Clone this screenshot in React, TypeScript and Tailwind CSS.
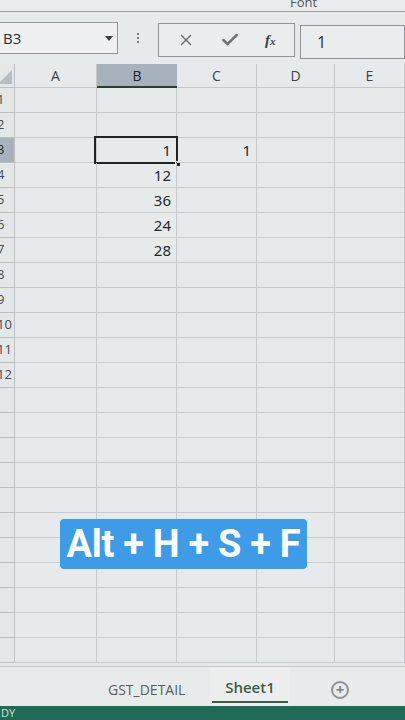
import { X, Check } from 'lucide-react';

const cols = [
  { key: 'A', w: 'w-[82px]' },
  { key: 'B', w: 'w-[80px]' },
  { key: 'C', w: 'w-[80px]' },
  { key: 'D', w: 'w-[78px]' },
  { key: 'E', w: 'w-[70px]' },
];

const data: Record<string, string> = {
  B3: '1',
  C3: '1',
  B4: '12',
  B5: '36',
  B6: '24',
  B7: '28',
};

const ROWS = 23;

function RowHeader({ n }: { n: number }) {
  const active = n === 3;
  return (
    <div
      className={`w-[15px] h-[25px] shrink-0 overflow-hidden border-r border-b border-[#b9bfc2] flex items-center ${
        active ? 'bg-[#a9b3bd]' : 'bg-[#e3e7e8]'
      }`}
    >
      {n <= 12 && (
        <span className={`ml-[-3px] text-[13px] ${active ? 'text-[#1d2a22]' : 'text-[#444a4d]'}`}>{n}</span>
      )}
    </div>
  );
}

export default function App() {
  return (
    <div
      className="relative w-[405px] h-[720px] overflow-hidden bg-[#e6eaeb] text-[#2b2f31]"
      style={{ fontFamily: '"Open Sans", "Noto Sans", sans-serif' }}
    >
      {/* ribbon remnant */}
      <div className="h-[12px] border-b border-[#9aa1a4] bg-[#e9ecec] relative overflow-hidden">
        <span className="absolute left-[290px] top-[-7px] text-[13px] text-[#50575a]">Font</span>
      </div>

      {/* formula bar */}
      <div className="h-[52px] flex items-center">
        <div className="ml-[-2px] w-[120px] h-[32px] border border-[#8d9396] bg-[#eef0f1] flex items-center justify-between px-[4px]">
          <span className="text-[15px] text-[#2a2e30]">B3</span>
          <span className="w-0 h-0 border-l-[4px] border-r-[4px] border-t-[5px] border-l-transparent border-r-transparent border-t-[#3a3f42]" />
        </div>
        <div className="w-[40px] flex flex-col items-center gap-[2px]">
          <span className="w-[2px] h-[2px] bg-[#767c7f]" />
          <span className="w-[2px] h-[2px] bg-[#767c7f]" />
          <span className="w-[2px] h-[2px] bg-[#767c7f]" />
        </div>
        <div className="w-[137px] h-[34px] mt-[4px] border border-[#8d9396] bg-[#eaeded] flex items-center justify-around px-[6px]">
          <X size={18} strokeWidth={2} className="text-[#6c7376]" />
          <Check size={20} strokeWidth={3} className="text-[#6c7376]" />
          <span className="text-[15px] italic font-bold text-[#3c4245]" style={{ fontFamily: '"Liberation Serif", serif' }}>
            f<span className="text-[11px]">x</span>
          </span>
        </div>
        <div className="ml-[5px] flex-1 h-[34px] mt-[8px] border border-[#8d9396] bg-[#eaeded] flex items-center pl-[16px]">
          <span className="text-[16px] text-[#2a2e30]">1</span>
        </div>
      </div>

      {/* column headers */}
      <div className="flex h-[24px]">
        <div className="w-[15px] h-full bg-[#e3e7e8] border-r border-b border-[#b9bfc2] relative overflow-hidden">
          <span className="absolute right-[2px] bottom-[3px] w-0 h-0 border-b-[14px] border-l-[14px] border-l-transparent border-b-[#b6bdc1]" />
        </div>
        {cols.map((c) => (
          <div
            key={c.key}
            className={`${c.w} h-full shrink-0 flex items-center justify-center text-[14px] ${
              c.key === 'B'
                ? 'bg-[#a8b2bd] border-b-2 border-[#2e3a34] text-[#1b2420]'
                : 'bg-[#e6eaeb] border-b border-r border-[#c3c8cb] text-[#3b4144]'
            }`}
          >
            {c.key}
          </div>
        ))}
      </div>

      {/* grid */}
      <div className="flex flex-col">
        {Array.from({ length: ROWS }, (_, i) => i + 1).map((n) => (
          <div key={n} className="flex">
            <RowHeader n={n} />
            {cols.map((c) => {
              const id = `${c.key}${n}`;
              const selected = id === 'B3';
              return (
                <div
                  key={id}
                  className={`${c.w} h-[25px] shrink-0 relative border-r border-b border-[#c6cbcd] flex items-center justify-end pr-[5px] text-[15px] text-[#25292b]`}
                  style={{ fontFamily: '"Noto Sans", sans-serif' }}
                >
                  {data[id]}
                  {selected && (
                    <>
                      <span className="absolute left-[-3px] top-[-2px] right-[-2px] bottom-[-2px] border-2 border-[#1f2522]" />
                      <span className="absolute right-[-5px] bottom-[-5px] w-[6px] h-[6px] bg-[#1f2522] border border-[#e6eaeb]" />
                    </>
                  )}
                </div>
              );
            })}
          </div>
        ))}
      </div>

      {/* sheet tabs */}
      <div className="absolute left-0 right-0 top-[666px] h-[40px] bg-[#e8ebeb] border-t border-[#c2c7c9] flex items-center">
        <div className="ml-[108px] w-[96px] text-[14px] text-[#565c5f] mt-[6px]">GST_DETAIL</div>
        <div className="ml-[6px] w-[80px] h-full flex flex-col items-center justify-center bg-[#eceeee]">
          <span className="text-[15px] font-semibold text-[#3f5a48] mt-[6px]">Sheet1</span>
          <span className="w-[76px] h-[2px] bg-[#3f5a48] mt-[3px]" />
        </div>
        <div className="ml-[41px] mt-[6px] w-[18px] h-[18px] rounded-full border-2 border-[#8c9295] flex items-center justify-center text-[#7a8083] text-[15px] font-bold leading-none">
          +
        </div>
      </div>

      {/* status bar */}
      <div className="absolute left-0 right-0 bottom-0 h-[14px] bg-[#1f6b58] flex items-center">
        <span className="text-[11px] text-[#cfe3dc] ml-[1px]">DY</span>
      </div>

      {/* shortcut caption */}
      <div className="absolute left-[60px] top-[519px] w-[247px] h-[50px] rounded-[4px] bg-[#3d9be8] flex items-center justify-center">
        <span
          className="text-white font-bold text-[38px] tracking-[-0.3px] leading-none"
          style={{ fontFamily: 'Roboto, "Liberation Sans", sans-serif' }}
        >
          Alt + H + S + F
        </span>
      </div>
    </div>
  );
}
